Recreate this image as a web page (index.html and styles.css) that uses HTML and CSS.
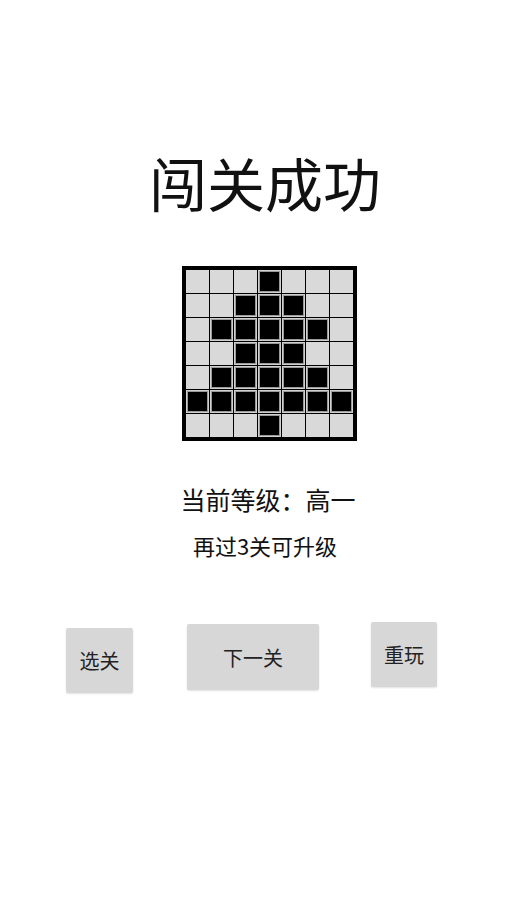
FILE: index.html
```html
<!DOCTYPE html>
<html lang="zh">
<head>
<meta charset="utf-8">
<title>闯关成功</title>
<link rel="stylesheet" href="styles.css">
</head>
<body>
<div class="page">
  <h1 class="title">闯关成功</h1>
  <div class="board">
    <div class="grid">
      <div class="c"></div><div class="c"></div><div class="c"></div><div class="c on"></div><div class="c"></div><div class="c"></div><div class="c"></div>
      <div class="c"></div><div class="c"></div><div class="c on"></div><div class="c on"></div><div class="c on"></div><div class="c"></div><div class="c"></div>
      <div class="c"></div><div class="c on"></div><div class="c on"></div><div class="c on"></div><div class="c on"></div><div class="c on"></div><div class="c"></div>
      <div class="c"></div><div class="c"></div><div class="c on"></div><div class="c on"></div><div class="c on"></div><div class="c"></div><div class="c"></div>
      <div class="c"></div><div class="c on"></div><div class="c on"></div><div class="c on"></div><div class="c on"></div><div class="c on"></div><div class="c"></div>
      <div class="c on"></div><div class="c on"></div><div class="c on"></div><div class="c on"></div><div class="c on"></div><div class="c on"></div><div class="c on"></div>
      <div class="c"></div><div class="c"></div><div class="c"></div><div class="c on"></div><div class="c"></div><div class="c"></div><div class="c"></div>
    </div>
  </div>
  <p class="level">当前等级：高一</p>
  <p class="hint">再过3关可升级</p>
  <div class="actions">
    <button class="btn btn-select">选关</button>
    <button class="btn btn-next">下一关</button>
    <button class="btn btn-replay">重玩</button>
  </div>
</div>
</body>
</html>
```

FILE: styles.css
```css
html, body {
  margin: 0;
  padding: 0;
  background: #ffffff;
}
body {
  font-family: "Noto Sans CJK SC", "Noto Sans", sans-serif;
  color: #111111;
}
.page {
  width: 530px;
  height: 900px;
  display: flex;
  flex-direction: column;
  align-items: center;
}
.title {
  margin: 150px 0 0 0;
  font-size: 58px;
  line-height: 64px;
  font-weight: 400;
  color: #111;
  letter-spacing: 0;
}
.board {
  margin-top: 52px;
  width: 175px;
  height: 175px;
  box-sizing: border-box;
  border: 3px solid #000;
  background: #000;
  padding: 1px;
  margin-left: 8px;
}
.grid {
  display: grid;
  grid-template-columns: repeat(7, 23px);
  grid-template-rows: repeat(7, 23px);
  gap: 1px;
}
.c {
  background: #d9d9d9;
}
.c.on {
  background: #000;
  box-shadow: inset 0 0 0 1px #d0d0d0, inset 0 0 0 2px #9a9a9a;
}
.level {
  margin: 40px 0 0 0;
  font-size: 25px;
  line-height: 36px;
  color: #111;
  margin-left: 6px;
}
.hint {
  margin: 13px 0 0 0;
  font-size: 22px;
  line-height: 30px;
  color: #111;
}
.actions {
  align-self: stretch;
  display: flex;
  align-items: flex-start;
  padding-left: 66px;
  margin-top: 62px;
}
.btn {
  border: none;
  border-radius: 2px;
  background: #d7d7d7;
  box-shadow: 0 1px 2px rgba(0,0,0,0.12);
  font-family: "Noto Sans CJK SC", "Noto Sans", sans-serif;
  font-size: 20px;
  color: #222;
  padding: 0;
  height: 65px;
}
.btn-select {
  width: 67px;
  margin-top: 6px;
}
.btn-next {
  width: 132px;
  height: 66px;
  margin-top: 2px;
  margin-left: 54px;
}
.btn-replay {
  width: 66px;
  margin-left: 52px;
}
```
